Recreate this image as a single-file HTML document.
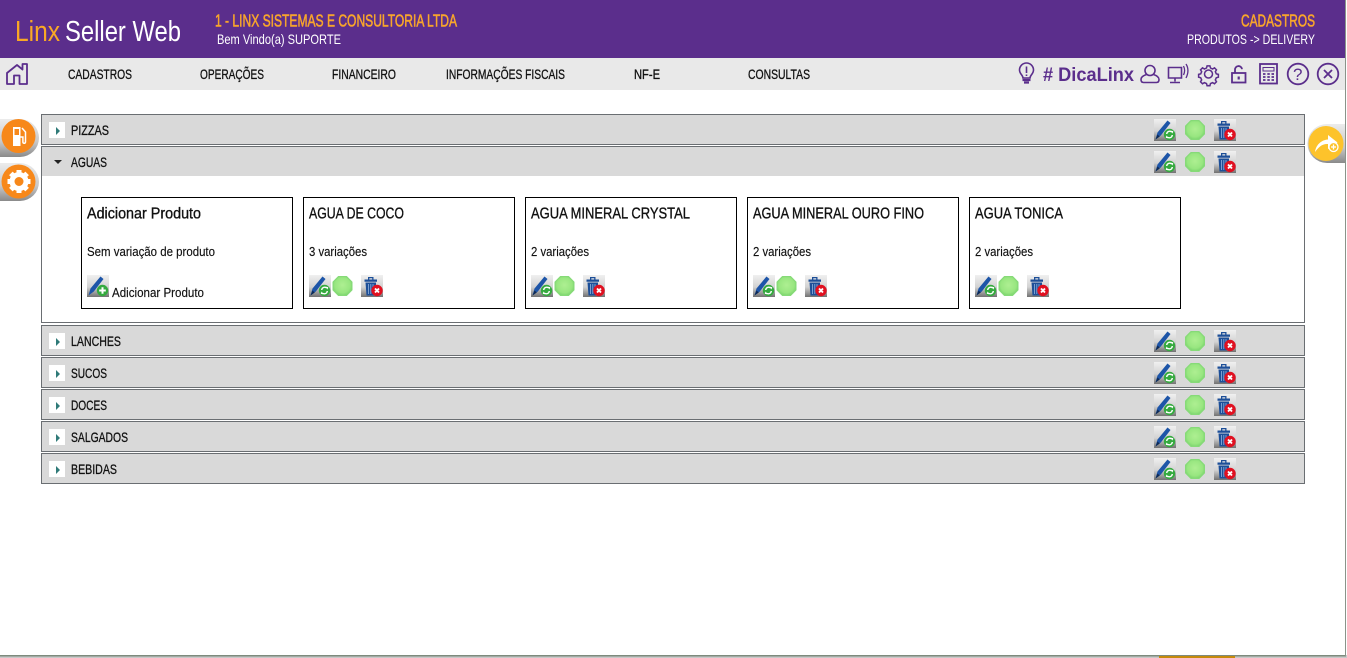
<!DOCTYPE html>
<html><head><meta charset="utf-8"><style>
html,body{margin:0;padding:0;background:#fff;width:1347px;height:658px;overflow:hidden}
svg{display:block}
text{font-family:"Liberation Sans",sans-serif;fill:#111}
.b text{stroke:#111;stroke-width:.3px}
.t text{stroke:#111;stroke-width:.35px}
.s text{stroke:#111;stroke-width:.15px}
.o{fill:#f9a62b;stroke:#f9a62b;stroke-width:.55px}
.w{fill:#fff}
</style></head><body>
<svg width="1347" height="658" viewBox="0 0 1347 658" xmlns="http://www.w3.org/2000/svg">
<defs>
<linearGradient id="ig" x1="0" y1="0" x2="0" y2="1"><stop offset="0" stop-color="#f0f0f0"/><stop offset=".55" stop-color="#d2d2d2"/><stop offset="1" stop-color="#727272"/></linearGradient>
<linearGradient id="tab" x1="0" y1="0" x2="0" y2="1"><stop offset="0" stop-color="#ececec"/><stop offset=".6" stop-color="#c8c8c8"/><stop offset="1" stop-color="#8a8a8a"/></linearGradient>
<radialGradient id="gr" cx=".5" cy=".45" r=".55"><stop offset="0" stop-color="#aeef92"/><stop offset=".75" stop-color="#98e680"/><stop offset="1" stop-color="#7fd670"/></radialGradient>
<symbol id="edit" viewBox="0 0 22 22" overflow="visible">
<rect width="22" height="22" fill="url(#ig)"/>
<path d="M1.500 20.500L3.500 13.500 13.500 1.500 16.500 4 6.800 16.500Z" fill="#1d55a8"/>
<path d="M1.500 20.500L3.500 15.500 5.800 17.500Z" fill="#0e2a55"/>
<circle cx="15.500" cy="15.500" r="5.700" fill="#35aa3f"/>
<path d="M12.700 15a3 3 0 0 1 5.200-1.800M18.300 16a3 3 0 0 1-5.200 1.800" stroke="#fff" stroke-width="1.400" fill="none"/>
<path d="M17 11.800l2.200.3-.3 2.500zM14 19.200l-2.200-.3.3-2.500z" fill="#fff"/>
</symbol>
<symbol id="add" viewBox="0 0 22 22" overflow="visible">
<rect width="22" height="22" fill="url(#ig)"/>
<path d="M1.500 20.500L3.500 13.500 13.500 1.500 16.500 4 6.800 16.500Z" fill="#1d55a8"/>
<circle cx="15.500" cy="15.500" r="5.700" fill="#35aa3f"/>
<path d="M15.500 12.200v6.600M12.200 15.500h6.600" stroke="#fff" stroke-width="2"/>
</symbol>
<symbol id="trash" viewBox="0 0 22 22" overflow="visible">
<rect width="22" height="22" fill="url(#ig)"/>
<path d="M3.500 4.500h12.500v2.200H3.500zM7 2h5.500v2.500h-1.300V3.200H8.300v1.300H7z" fill="#1d4f98"/>
<path d="M4.500 7.500h10.500v13H5.500z" fill="#1d4f98"/>
<path d="M7.500 9v10M9.800 9v10M12 9v10" stroke="#86a8d8" stroke-width=".9"/>
<circle cx="16" cy="15.500" r="5.700" fill="#e01020"/>
<path d="M14 13.500l4 4M18 13.500l-4 4" stroke="#fff" stroke-width="1.900"/>
</symbol>
<symbol id="dot" viewBox="0 0 20 20" overflow="visible">
<path d="M6 .6h8l5.400 5.400v8L14 19.400H6L.6 14V6Z" fill="url(#gr)" stroke="#86da78" stroke-width="1.200" stroke-linejoin="round"/>
</symbol>
<g id="icons3"><use href="#edit" x="0" y="0" width="22" height="22"/><use href="#dot" x="31" y="1" width="20" height="20"/><use href="#trash" x="60" y="0" width="22" height="22"/></g>
<g id="icons4"><use href="#edit" x="0" y="0" width="22" height="22"/><use href="#dot" x="23.500" y="1" width="20" height="20"/><use href="#trash" x="52" y="0" width="22" height="22"/></g>
<g id="closed"><rect x="49" y="7" width="16" height="16" fill="#fff"/><path d="M56 12l4 4-4 4z" fill="#2f7a78"/></g>
</defs>

<!-- outer bottom/right -->
<rect x="0" y="655" width="1347" height="3" fill="#c9c9c9"/>
<rect x="0" y="655" width="1346" height="1.500" fill="#7d8b7d"/>
<rect x="1159" y="656" width="76" height="2" fill="#c68a0b"/>
<rect x="1345" y="0" width="1" height="656" fill="#8a948a"/>

<!-- header -->
<rect x="0" y="0" width="1345" height="58" fill="#5b2e8c"/>
<rect x="0" y="58" width="1345" height="32" fill="#e9e9e9"/>
<text x="15" y="41" font-size="29" style="fill:#f9a825" textLength="45" lengthAdjust="spacingAndGlyphs">Linx</text>
<text x="65" y="41" font-size="29" class="w" style="fill:#fff" textLength="116" lengthAdjust="spacingAndGlyphs">Seller Web</text>
<text x="215" y="26.500" font-size="17.500" class="o" style="fill:#f9a62b" textLength="242" lengthAdjust="spacingAndGlyphs">1 - LINX SISTEMAS E CONSULTORIA LTDA</text>
<text x="217" y="44" font-size="14" style="fill:#fff" textLength="124" lengthAdjust="spacingAndGlyphs">Bem Vindo(a) SUPORTE</text>
<text x="1241" y="26.500" font-size="17.500" class="o" style="fill:#f9a62b" textLength="74" lengthAdjust="spacingAndGlyphs">CADASTROS</text>
<text x="1187" y="44" font-size="14" style="fill:#fff" textLength="128" lengthAdjust="spacingAndGlyphs">PRODUTOS -&gt; DELIVERY</text>

<!-- nav -->
<g font-size="13.500" class="b">
<text x="68" y="79" textLength="64" lengthAdjust="spacingAndGlyphs">CADASTROS</text>
<text x="200" y="79" textLength="64" lengthAdjust="spacingAndGlyphs">OPERAÇÕES</text>
<text x="332" y="79" textLength="64" lengthAdjust="spacingAndGlyphs">FINANCEIRO</text>
<text x="446" y="79" textLength="119" lengthAdjust="spacingAndGlyphs">INFORMAÇÕES FISCAIS</text>
<text x="634" y="79" textLength="26" lengthAdjust="spacingAndGlyphs">NF-E</text>
<text x="748" y="79" textLength="62" lengthAdjust="spacingAndGlyphs">CONSULTAS</text>
</g>
<!-- home -->
<path d="M7 84V73L17 65l5.500 4.500V64h4.500v20h-7.500V75.500h-5.500V84Z" fill="none" stroke="#5b2e8c" stroke-width="1.800" stroke-linejoin="round"/>
<!-- right nav icons -->
<g fill="none" stroke="#5b2e8c" stroke-width="1.600">
<path d="M1023 78c0-3-3.500-4-3.500-8a7 7 0 0 1 14 0c0 4-3.500 5-3.500 8Z"/>
<path d="M1026.500 66.500v6.500M1026.500 74.500v1.500"/>
<path d="M1022.500 80h8M1024 82.500h5" stroke-width="2.200"/>
<circle cx="1150" cy="70.500" r="5"/>
<path d="M1146.500 74.500c-3 1-5.500 2.500-5.500 5 0 2 1 3 2.500 3h13c1.500 0 2.500-1 2.500-3 0-2.500-2.500-4-5.500-5"/>
<path d="M1168.500 67.500h13v10.500h-13zM1175 78v3.500M1170 82.500h10"/>
<path d="M1183.500 66c1.500 3 1.500 6 0 9M1186 64c2.500 4 2.500 9 0 14" stroke-width="1.300"/>
<g transform="translate(1208.500 74) scale(.95)"><circle r="4.200"/><path d="M-1.500-8.500h3l.6 2.200 2.200 1 2-1.200 2.100 2.100-1.200 2 1 2.200 2.200.6v3l-2.200.6-1 2.200 1.200 2-2.100 2.100-2-1.200-2.200 1-.6 2.200h-3l-.6-2.200-2.200-1-2 1.200-2.100-2.100 1.200-2-1-2.200-2.200-.6v-3l2.200-.6 1-2.200-1.200-2 2.100-2.100 2 1.200 2.200-1Z"/></g>
<rect x="1232" y="73" width="13.500" height="9.500" stroke-width="1.800"/>
<path d="M1235 73V70a3.500 3.500 0 0 1 7-.8" stroke-width="1.800"/>
<path d="M1238.700 76.500v3" stroke-width="2.200"/>
<rect x="1260" y="64" width="17" height="19.500" stroke-width="1.800"/>
<path d="M1263 67.500h11v3.500h-11z" stroke-width="1"/>
<path d="M1263 74h2.500M1267.300 74h2.500M1271.500 74h2.500M1263 77h2.500M1267.300 77h2.500M1271.500 77h2.500M1263 80h2.500M1267.300 80h2.500M1271.500 80h2.500" stroke-width="1.800"/>
<circle cx="1298" cy="74" r="10.300" stroke-width="1.800"/>
<circle cx="1328" cy="74" r="10.300" stroke-width="1.800"/>
<path d="M1324 70l8 8M1332 70l-8 8" stroke-width="1.800"/>
</g>
<text x="1293" y="80" font-size="17" style="fill:#5b2e8c">?</text>
<text x="1043" y="81" font-size="19" font-weight="bold" style="fill:#5b2e8c" textLength="91" lengthAdjust="spacingAndGlyphs"># DicaLinx</text>

<!-- panels -->
<g fill="#d9d9d9" stroke="#6a6e72" stroke-width="1">
<rect x="41.500" y="114.500" width="1263" height="30"/>
<rect x="41.500" y="146.500" width="1263" height="176" fill="#fff"/>
<rect x="42" y="147" width="1262" height="29" stroke="none"/>
<rect x="41.500" y="325.500" width="1263" height="30"/>
<rect x="41.500" y="357.500" width="1263" height="30"/>
<rect x="41.500" y="389.500" width="1263" height="30"/>
<rect x="41.500" y="421.500" width="1263" height="30"/>
<rect x="41.500" y="453.500" width="1263" height="30"/>
</g>
<use href="#closed" y="115"/>
<path d="M54 160h8l-4 4z" fill="#222"/>
<use href="#closed" y="326"/><use href="#closed" y="358"/><use href="#closed" y="390"/><use href="#closed" y="422"/><use href="#closed" y="454"/>
<g font-size="14" class="b">
<text x="71" y="135" textLength="38" lengthAdjust="spacingAndGlyphs">PIZZAS</text>
<text x="71" y="167" textLength="36" lengthAdjust="spacingAndGlyphs">AGUAS</text>
<text x="71" y="346" textLength="50" lengthAdjust="spacingAndGlyphs">LANCHES</text>
<text x="71" y="378" textLength="36" lengthAdjust="spacingAndGlyphs">SUCOS</text>
<text x="71" y="410" textLength="36" lengthAdjust="spacingAndGlyphs">DOCES</text>
<text x="71" y="442" textLength="57" lengthAdjust="spacingAndGlyphs">SALGADOS</text>
<text x="71" y="474" textLength="46" lengthAdjust="spacingAndGlyphs">BEBIDAS</text>
</g>
<use href="#icons3" x="1154" y="119"/><use href="#icons3" x="1154" y="151"/>
<use href="#icons3" x="1154" y="330"/><use href="#icons3" x="1154" y="362"/><use href="#icons3" x="1154" y="394"/><use href="#icons3" x="1154" y="426"/><use href="#icons3" x="1154" y="458"/>

<!-- cards -->
<g fill="#fff" stroke="#000" stroke-width="1">
<rect x="81.500" y="197.500" width="211" height="111"/>
<rect x="303.500" y="197.500" width="211" height="111"/>
<rect x="525.500" y="197.500" width="211" height="111"/>
<rect x="747.500" y="197.500" width="211" height="111"/>
<rect x="969.500" y="197.500" width="211" height="111"/>
</g>
<g font-size="16" class="t">
<text x="87" y="218.500" textLength="114" lengthAdjust="spacingAndGlyphs">Adicionar Produto</text>
<text x="309" y="218.500" textLength="95" lengthAdjust="spacingAndGlyphs">AGUA DE COCO</text>
<text x="531" y="218.500" textLength="159" lengthAdjust="spacingAndGlyphs">AGUA MINERAL CRYSTAL</text>
<text x="753" y="218.500" textLength="171" lengthAdjust="spacingAndGlyphs">AGUA MINERAL OURO FINO</text>
<text x="975" y="218.500" textLength="88" lengthAdjust="spacingAndGlyphs">AGUA TONICA</text>
</g>
<g font-size="13" class="s">
<text x="87" y="256" textLength="128" lengthAdjust="spacingAndGlyphs">Sem variação de produto</text>
<text x="309" y="256" textLength="58" lengthAdjust="spacingAndGlyphs">3 variações</text>
<text x="531" y="256" textLength="58" lengthAdjust="spacingAndGlyphs">2 variações</text>
<text x="753" y="256" textLength="58" lengthAdjust="spacingAndGlyphs">2 variações</text>
<text x="975" y="256" textLength="58" lengthAdjust="spacingAndGlyphs">2 variações</text>
<text x="112" y="297" textLength="92" lengthAdjust="spacingAndGlyphs">Adicionar Produto</text>
</g>
<use href="#add" x="87" y="275" width="22" height="22"/>
<use href="#icons4" x="309" y="275"/><use href="#icons4" x="531" y="275"/><use href="#icons4" x="753" y="275"/><use href="#icons4" x="975" y="275"/>

<!-- side tabs -->
<path d="M0 119h20a19 19 0 0 1 19 19 19 19 0 0 1-19 19H0Z" fill="url(#tab)"/>
<circle cx="18.500" cy="136" r="17" fill="#f7881a"/>
<path d="M13 127h7.500v19H13z" fill="#fff"/>
<path d="M14.500 129h4.500v6h-4.500z" fill="#f7881a"/>
<path d="M22 128l3.500 4v10a1.300 1.300 0 0 1-2.600 0v-5h-2.400" fill="none" stroke="#fff" stroke-width="1.500"/>
<path d="M0 163h20a19 19 0 0 1 19 19 19 19 0 0 1-19 19H0Z" fill="url(#tab)"/>
<circle cx="18.500" cy="181.500" r="17" fill="#f7881a"/>
<g transform="translate(19 181.500)">
<circle r="7" fill="none" stroke="#fff" stroke-width="5"/>
<path d="M-2.500-11.500h5v4h-5zM-2.500 7.500h5v4h-5zM-11.500-2.500h4v5h-4zM7.500-2.500h4v5h-4z" fill="#fff"/>
<path d="M-2.500-11.500h5v4h-5zM-2.500 7.500h5v4h-5zM-11.500-2.500h4v5h-4zM7.500-2.500h4v5h-4z" fill="#fff" transform="rotate(45)"/>
</g>
<path d="M1345 124h-18a19.500 19.500 0 0 0 0 39h18Z" fill="url(#tab)"/>
<circle cx="1326" cy="143.500" r="17.500" fill="#fdc32b"/>
<path d="M1315 152c1-7 6-12 13-12.500V135l9.500 7.500-9.500 6.500v-5c-5.500-.5-9.500 3-13 8Z" fill="#fff"/>
<circle cx="1333.500" cy="147" r="4.500" fill="#fdc32b" stroke="#fff" stroke-width="1.300"/>
<path d="M1333.500 144.500v5M1331 147h5" stroke="#fff" stroke-width="1.300"/>
</svg>
</body></html>
